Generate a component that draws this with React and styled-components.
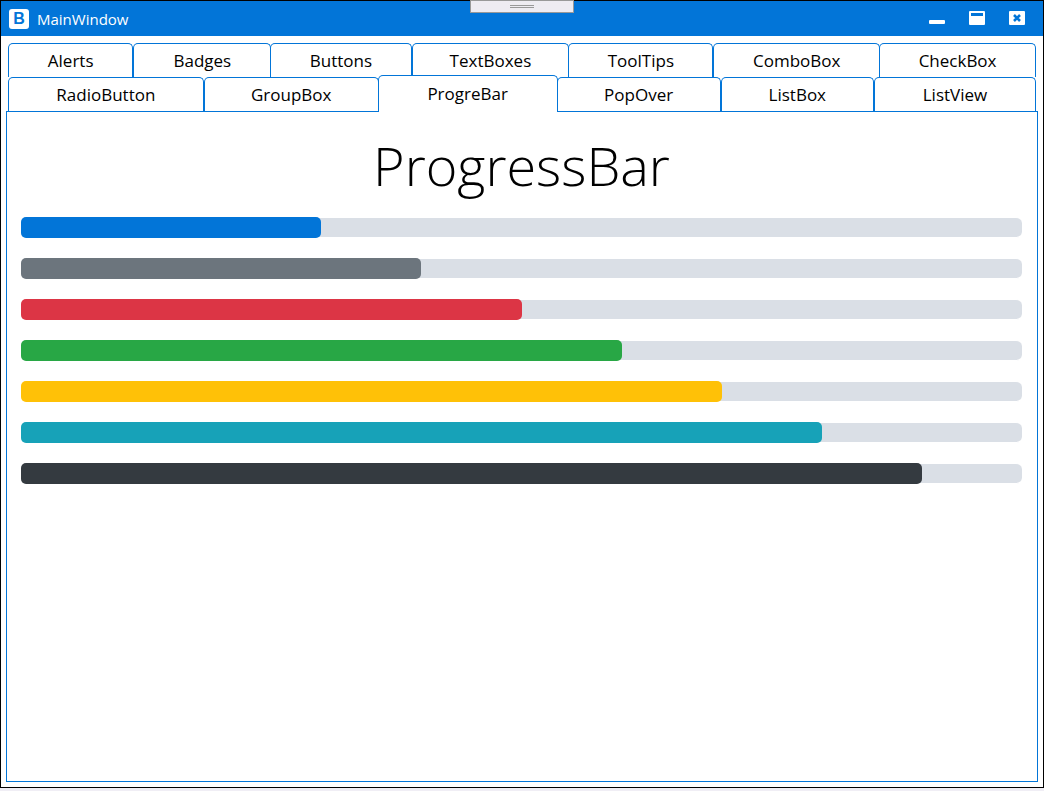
import React, { useState } from 'react';
import styled, { createGlobalStyle, css } from 'styled-components';

const PRIMARY = '#0275d8';

const GlobalStyle = createGlobalStyle`
  *, *::before, *::after { box-sizing: border-box; }
  body {
    margin: 0;
    background: #f0eef5;
    color: #000;
    font-family: "Segoe UI", "Open Sans", "Noto Sans", sans-serif;
  }
`;

const Window = styled.div`
  position: relative;
  display: flex;
  flex-direction: column;
  min-height: calc(100vh - 3px);
  border: 1px solid #000;
  background: #fff;
`;

const TitleBar = styled.header`
  display: flex;
  align-items: center;
  gap: 8px;
  height: 35px;
  padding: 0 18px 0 8px;
  background: ${PRIMARY};
  color: #fff;
`;

const Logo = styled.span`
  display: grid;
  place-items: center;
  width: 20px;
  height: 20px;
  border-radius: 3px;
  background: #fff;
  color: ${PRIMARY};
  font: bold 16px/20px "Liberation Sans", Arial, sans-serif;
`;

const Title = styled.span`
  flex: 1;
  font-size: 15px;
  line-height: 20px;
`;

const WindowButtons = styled.div`
  display: flex;
  gap: 24px;
`;

const WindowButton = styled.button`
  display: flex;
  align-items: flex-start;
  width: 16px;
  height: 17px;
  padding: 0;
  border: 0;
  background: none;
  color: #fff;
`;

const DebugHandle = styled.div`
  position: absolute;
  top: -1px;
  left: 50%;
  display: grid;
  place-items: center;
  width: 104px;
  height: 13px;
  transform: translateX(-50%);
  border: 1px solid #999;
  background: #eeecf2;

  &::before {
    content: "";
    width: 24px;
    height: 3px;
    border: solid #999;
    border-width: 1px 0;
  }
`;

const Body = styled.main`
  flex: 1;
  display: flex;
  flex-direction: column;
  padding: 7px 5px 5px;
`;

const TabRow = styled.div`
  display: flex;
  align-items: flex-end;
  height: 34px;
  padding: 0 2px;
`;

const Tab = styled.button`
  flex: ${(p) => p.$share} 1 0;
  height: 34px;
  margin-left: ${(p) => (p.$joined ? '-1px' : '0')};
  padding: 0;
  border: 1px solid ${PRIMARY};
  border-bottom: 0;
  border-radius: 5px 5px 0 0;
  background: #fff;
  color: #000;
  font-family: inherit;
  font-size: 17px;
  font-weight: 400;
  line-height: 24px;
  white-space: nowrap;

  ${(p) => p.$active && css`
    position: relative;
    z-index: 1;
    height: 37px;
    margin: 0 -1px -1px;
  `}
`;

const Panel = styled.section`
  flex: 1;
  padding: 14px 15px 14px 14px;
  border: 1px solid ${PRIMARY};
`;

const Heading = styled.h1`
  margin: 0 0 13px;
  font-size: 54px;
  font-weight: 300;
  line-height: 78px;
  text-align: center;
`;

const BarList = styled.div`
  display: grid;
  gap: 20px;
`;

const Track = styled.div`
  height: 21px;
  border: solid #fff;
  border-width: 1px 0;
  border-radius: 6px;
  background: #dadfe6;
`;

const Fill = styled.div`
  height: 21px;
  margin-top: -1px;
  border-radius: 5px;
  background: ${(p) => p.$color};
`;

const tabRows = [
  [
    { label: 'Alerts', share: 125 },
    { label: 'Badges', share: 138 },
    { label: 'Buttons', share: 141, joined: true },
    { label: 'TextBoxes', share: 158 },
    { label: 'ToolTips', share: 145, joined: true },
    { label: 'ComboBox', share: 167 },
    { label: 'CheckBox', share: 157, joined: true },
  ],
  [
    { label: 'RadioButton', share: 196 },
    { label: 'GroupBox', share: 175 },
    { label: 'ProgreBar', share: 180 },
    { label: 'PopOver', share: 164 },
    { label: 'ListBox', share: 153 },
    { label: 'ListView', share: 162 },
  ],
];

const bars = [
  { name: 'Primary', value: 30, color: PRIMARY },
  { name: 'Secondary', value: 40, color: '#6c757d' },
  { name: 'Danger', value: 50, color: '#dc3545' },
  { name: 'Success', value: 60, color: '#28a745' },
  { name: 'Warning', value: 70, color: '#ffc107' },
  { name: 'Info', value: 80, color: '#17a2b8' },
  { name: 'Dark', value: 90, color: '#343a40' },
];

export default function App() {
  const [active, setActive] = useState('ProgreBar');

  return (
    <>
      <GlobalStyle />
      <Window>
        <TitleBar>
          <Logo aria-hidden="true">B</Logo>
          <Title>MainWindow</Title>
          <WindowButtons>
            <WindowButton type="button" aria-label="Minimize">
              <svg width="16" height="16" viewBox="0 0 16 16">
                <rect y="10" width="16" height="4" rx="1" fill="currentColor" />
              </svg>
            </WindowButton>
            <WindowButton type="button" aria-label="Maximize">
              <svg width="16" height="16" viewBox="0 0 16 16">
                <rect y="1" width="16" height="14" rx="1" fill="currentColor" />
                <path d="M2 3h12v3H2z" fill={PRIMARY} />
              </svg>
            </WindowButton>
            <WindowButton type="button" aria-label="Close">
              <svg width="16" height="16" viewBox="0 0 16 16">
                <rect y="1" width="16" height="14" rx="1" fill="currentColor" />
                <path d="M5 5l6 6M11 5l-6 6" stroke={PRIMARY} strokeWidth="2.6" />
              </svg>
            </WindowButton>
          </WindowButtons>
        </TitleBar>
        <DebugHandle />
        <Body>
          <div role="tablist" aria-label="Controls">
            {tabRows.map((row) => (
              <TabRow key={row[0].label} role="presentation">
                {row.map((tab) => (
                  <Tab
                    key={tab.label}
                    type="button"
                    role="tab"
                    aria-selected={tab.label === active}
                    $active={tab.label === active}
                    $share={tab.share}
                    $joined={tab.joined}
                    onClick={() => setActive(tab.label)}
                  >
                    {tab.label}
                  </Tab>
                ))}
              </TabRow>
            ))}
          </div>
          <Panel role="tabpanel" aria-label={active}>
            <Heading>ProgressBar</Heading>
            <BarList>
              {bars.map((bar) => (
                <Track
                  key={bar.name}
                  role="progressbar"
                  aria-label={bar.name}
                  aria-valuemin={0}
                  aria-valuemax={100}
                  aria-valuenow={bar.value}
                >
                  <Fill $color={bar.color} style={{ width: `${bar.value}%` }} />
                </Track>
              ))}
            </BarList>
          </Panel>
        </Body>
      </Window>
    </>
  );
}
